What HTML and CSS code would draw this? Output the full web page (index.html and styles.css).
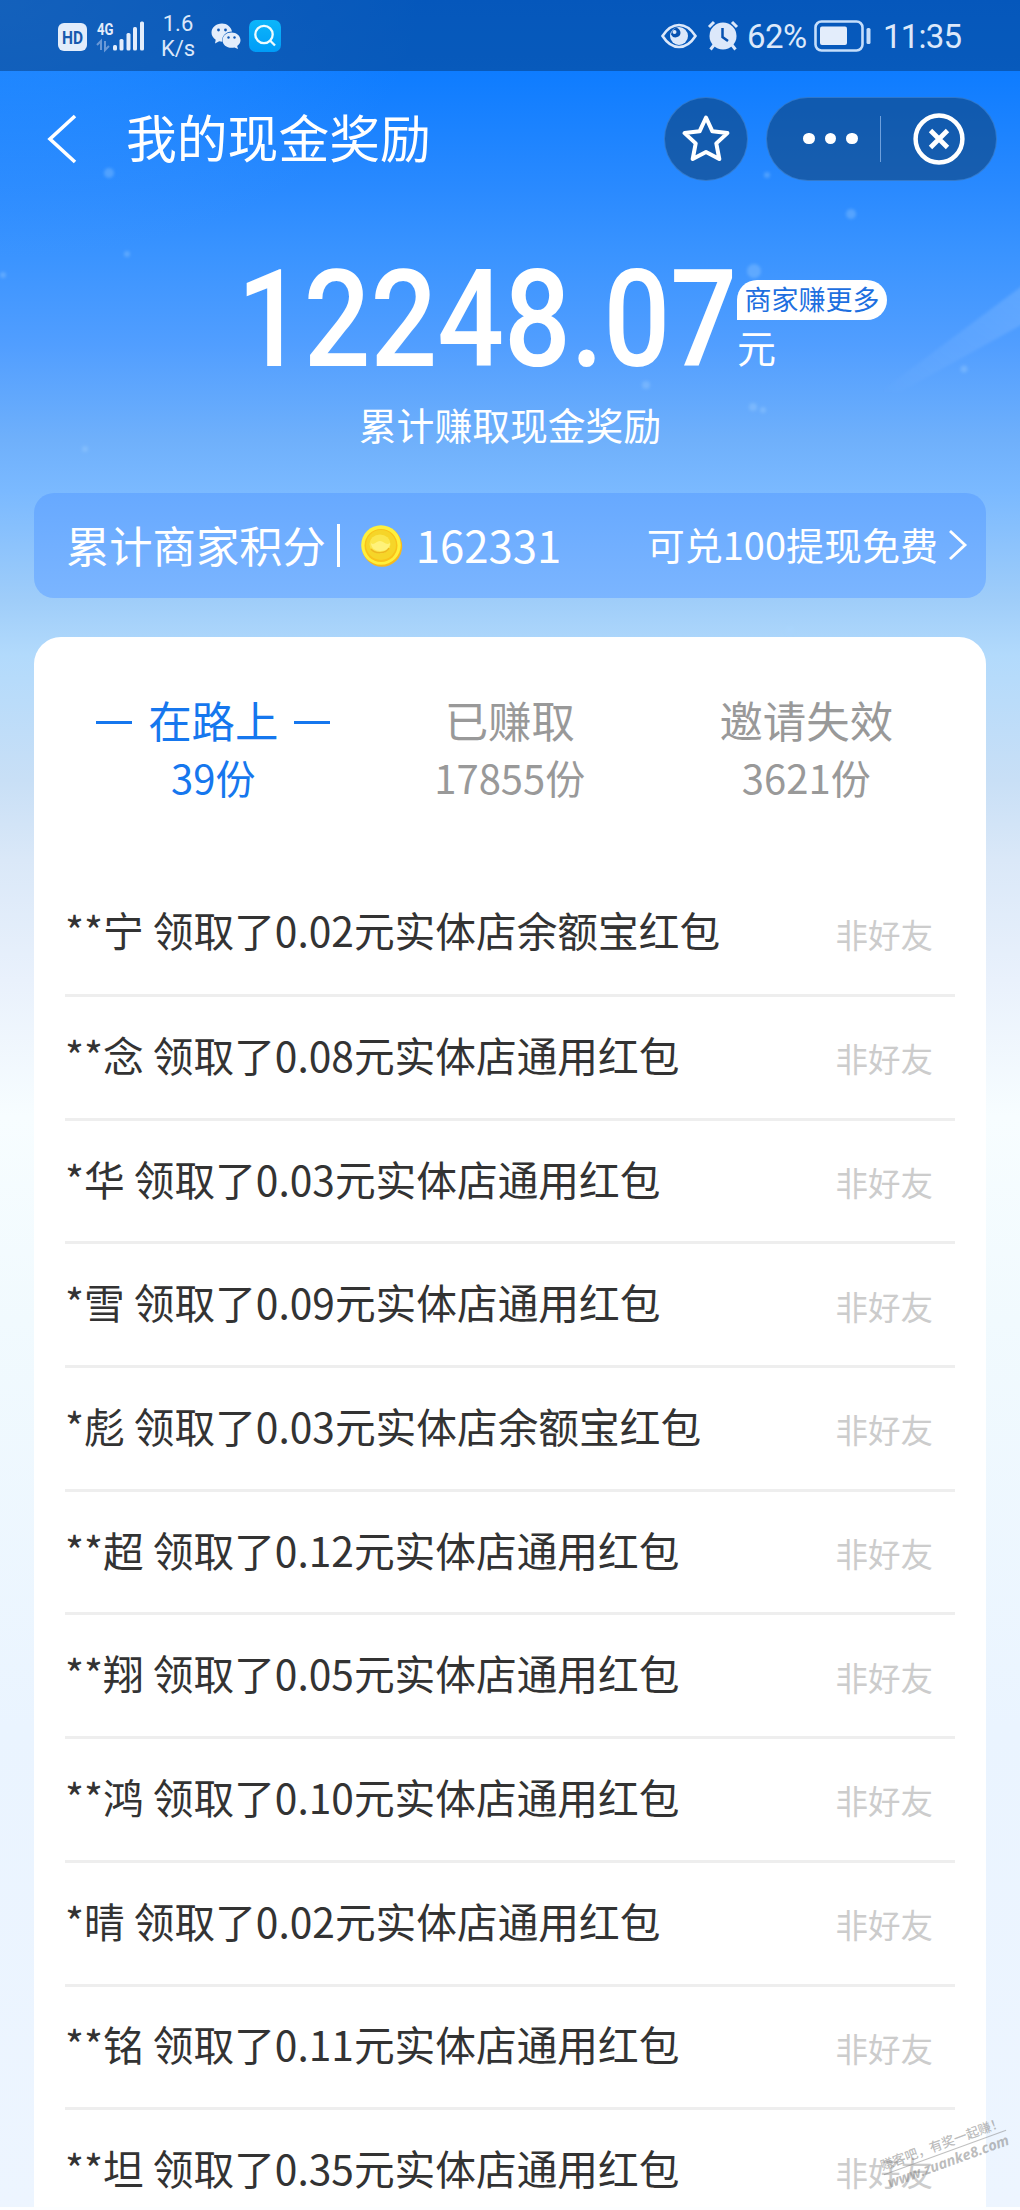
FILE: index.html
```
<!DOCTYPE html>
<html lang="zh-CN">
<head>
<meta charset="utf-8">
<title>我的现金奖励</title>
<link rel="stylesheet" href="styles.css">
</head>
<body>
<div class="page">
  <svg class="sparkles" width="1020" height="660" viewBox="0 0 1020 660" aria-hidden="true">
    <defs>
      <linearGradient id="ray" x1="0" y1="1" x2="1" y2="0"><stop offset="0" stop-color="#fff" stop-opacity="0"/><stop offset="1" stop-color="#fff" stop-opacity=".15"/></linearGradient>
      <filter id="soft" x="-20%" y="-20%" width="140%" height="140%"><feGaussianBlur stdDeviation="1.500"/></filter>
    </defs>
    <path d="M880 392 L1030 280 L1030 320 L900 392 Z" fill="url(#ray)" filter="url(#soft)"/>
    <g fill="#a9d8ff" fill-opacity=".3" filter="url(#soft)">
      <circle cx="109" cy="173" r="5"/><circle cx="3" cy="275" r="3"/><circle cx="127" cy="254" r="3"/>
      <circle cx="85" cy="449" r="3"/><circle cx="851" cy="214" r="5"/><circle cx="767" cy="175" r="3"/>
      <circle cx="754" cy="271" r="7"/><circle cx="646" cy="385" r="4"/><circle cx="753" cy="407" r="4"/>
      <circle cx="763" cy="410" r="3"/><circle cx="964" cy="369" r="3.500"/><circle cx="790" cy="630" r="4"/>
    </g>
  </svg>

  <header class="status">
    <svg class="status-left" width="150" height="70" viewBox="0 0 150 70">
      <rect x="58" y="22" width="29" height="28" rx="6" fill="#e3edfb"/>
      <text x="72.500" y="42.500" class="hd" text-anchor="middle" textLength="21" lengthAdjust="spacingAndGlyphs">HD</text>
      <text x="97" y="34" class="net" textLength="16.500" lengthAdjust="spacingAndGlyphs">4G</text>
      <path d="M97 44l4-4v9M105 40v9l4-4" stroke="#6a99d6" stroke-width="2" fill="none"/>
      <g fill="#e3edfb"><rect x="113" y="44" width="4" height="5.500" rx="1.500"/><rect x="119.500" y="38" width="4" height="11.500" rx="1.500"/><rect x="126.500" y="32" width="4" height="17.500" rx="1.500"/><rect x="133" y="26" width="4" height="23.500" rx="1.500"/><rect x="140" y="20.500" width="4" height="29" rx="1.500"/></g>
    </svg>
    <div class="speed"><span>1.6</span><span>K/s</span></div>
    <svg class="wechat" width="30" height="26" viewBox="0 0 30 26">
      <path fill="#e3edfb" d="M11 .5C5 .5 .5 4.500 .5 9.500c0 3 1.600 5.500 4.200 7.200L4 20.500l4.200-2.200 3 .4C10.500 13 15 8.500 21 8.500 20 4 16 .5 11 .5z"/>
      <path fill="#e3edfb" d="M20.500 9.500c-5 0-9 3.400-9 7.700s4 7.600 9 7.600c1 0 2-.1 3-.4l3.500 1.600-.8-3c2-1.500 3.300-3.500 3.300-5.800 0-4.300-4-7.700-9-7.700z"/>
      <g fill="#0f57b4"><circle cx="7.500" cy="7" r="1.400"/><circle cx="14.500" cy="7" r="1.400"/><circle cx="17.500" cy="14.500" r="1.200"/><circle cx="23.500" cy="14.500" r="1.200"/></g>
    </svg>
    <svg class="search" width="32" height="32" viewBox="0 0 32 32"><defs><linearGradient id="sq" x1="0" y1="0" x2="0" y2="1"><stop stop-color="#0cb6fa"/><stop offset="1" stop-color="#009cf8"/></linearGradient></defs><rect width="32" height="32" rx="7" fill="url(#sq)"/><circle cx="15" cy="14.500" r="8.700" fill="none" stroke="#eefcff" stroke-width="2.300"/><path d="M21 20.500l5 5" stroke="#eefcff" stroke-width="2.300"/></svg>
    <svg class="eye" width="36" height="26" viewBox="0 0 36 26"><path d="M1.500 13C6 6 11.500 2 18 2s12 4 16.500 11C30 20 24.500 24 18 24S6 20 1.500 13z" fill="none" stroke="#dce8fa" stroke-width="2.600"/><circle cx="18" cy="13" r="9" fill="#dce8fa"/><path d="M15.500 4.500c2.500 1 4 3 4 5.500a5 5 0 0 1-9.500 1.500A9 9 0 0 1 15.500 4.500z" fill="#0651b0"/><circle cx="13.500" cy="9" r="2" fill="#dce8fa"/></svg>
    <svg class="alarm" width="32" height="32" viewBox="0 0 32 32"><circle cx="16" cy="16" r="13.500" fill="#dce8fa"/><path d="M2 7l5-5M30 7l-5-5M7 25l-3.500 4.500M25 25l3.500 4.500" stroke="#dce8fa" stroke-width="3"/><path d="M15.500 8v9l5.500 4" fill="none" stroke="#0651b0" stroke-width="2.500"/></svg>
    <span class="percent">62%</span>
    <svg class="battery" width="58" height="32" viewBox="0 0 58 32"><rect x="1.500" y="1.500" width="47" height="29" rx="6" fill="none" stroke="#c5defb" stroke-width="2.600"/><rect x="6" y="6.500" width="27" height="18.500" rx="2" fill="#e3edfb"/><rect x="52.500" y="8" width="4" height="16" rx="1.500" fill="#c5defb"/></svg>
    <span class="clock">11:35</span>
  </header>

  <nav class="nav">
    <svg class="back" width="32" height="52" viewBox="0 0 32 52"><path d="M29 3L4 26l25 23" fill="none" stroke="#fff" stroke-width="3.600"/></svg>
    <h1 class="title">我的现金奖励</h1>
    <div class="fav">
      <svg width="48" height="50" viewBox="0 0 48 50"><path d="M24 3.500l6.400 13.800 15 1.800-11.100 10.300 3 15.600L24 38l-13.300 7 3-15.600L2.600 19.100l15-1.800z" fill="none" stroke="#fff" stroke-width="4" stroke-linejoin="round"/></svg>
    </div>
    <div class="capsule">
      <div class="dots"><i></i><i></i><i></i></div>
      <div class="close"><svg width="52" height="52" viewBox="0 0 52 52"><circle cx="26" cy="26" r="23.400" fill="none" stroke="#fff" stroke-width="4.500"/><path d="M17.500 17.500l17 17M34.500 17.500l-17 17" stroke="#fff" stroke-width="4.800"/></svg></div>
    </div>
  </nav>

  <section class="total">
    <div class="amount"><span class="number">12248.07</span>
      <div class="unit"><span class="tag">商家赚更多</span><span class="yuan">元</span></div>
    </div>
    <p class="caption">累计赚取现金奖励</p>
  </section>

  <section class="points">
    <span class="points-label">累计商家积分</span>
    <i class="bar"></i>
    <svg class="coin" width="43" height="42" viewBox="0 0 43 42"><circle cx="22" cy="21.500" r="20.200" fill="#f7b91d"/><circle cx="21" cy="20" r="19.800" fill="#fff03c"/><circle cx="21" cy="20.500" r="16.500" fill="#f9c21a"/><circle cx="21" cy="20" r="15" fill="#f6d528"/><ellipse cx="20" cy="19" rx="10.500" ry="9.500" fill="#fbe64c"/><path d="M11 18c3 3 5-2 9-2s6 5 10 2c0 5-4 8-9.500 8S11 23 11 18z" fill="#fff27a"/><path d="M11 24c4 5 15 5 18-1" fill="none" stroke="#eeb71f" stroke-width="1.500"/></svg>
    <span class="points-value">162331</span>
    <span class="redeem">可兑100提现免费</span>
    <svg class="arrow" width="20" height="32" viewBox="0 0 20 32"><path d="M2 2l15 14L2 30" fill="none" stroke="#fff" stroke-width="2.800"/></svg>
  </section>

  <main class="card">
    <div class="tabs">
      <div class="tab active"><div class="tab-name"><i></i><span>在路上</span><i></i></div><div class="tab-count">39份</div></div>
      <div class="tab"><div class="tab-name">已赚取</div><div class="tab-count">17855份</div></div>
      <div class="tab"><div class="tab-name">邀请失效</div><div class="tab-count">3621份</div></div>
    </div>
    <ul class="list">
      <li><span>**宁 领取了0.02元实体店余额宝红包</span><em>非好友</em></li>
      <li><span>**念 领取了0.08元实体店通用红包</span><em>非好友</em></li>
      <li><span>*华 领取了0.03元实体店通用红包</span><em>非好友</em></li>
      <li><span>*雪 领取了0.09元实体店通用红包</span><em>非好友</em></li>
      <li><span>*彪 领取了0.03元实体店余额宝红包</span><em>非好友</em></li>
      <li><span>**超 领取了0.12元实体店通用红包</span><em>非好友</em></li>
      <li><span>**翔 领取了0.05元实体店通用红包</span><em>非好友</em></li>
      <li><span>**鸿 领取了0.10元实体店通用红包</span><em>非好友</em></li>
      <li><span>*晴 领取了0.02元实体店通用红包</span><em>非好友</em></li>
      <li><span>**铭 领取了0.11元实体店通用红包</span><em>非好友</em></li>
      <li><span>**坦 领取了0.35元实体店通用红包</span><em>非好友</em></li>
    </ul>
  </main>
  <div class="watermark"><span class="slogan">赚客吧，有奖一起赚！</span><span class="site">www.zuanke8.com</span></div>
</div>
</body>
</html>
```
FILE: styles.css
```
* { box-sizing: border-box; }
body { margin: 0; background: #fff; font-family: "Noto Sans CJK SC", "Noto Sans", sans-serif; color: #333; }
svg { display: block; flex: none; }
i, em { font-style: normal; }
span { white-space: nowrap; }

.page {
  position: relative; width: 1020px; height: 2210px; overflow: hidden;
  display: flex; flex-direction: column;
  border-bottom: 3px solid #fdfeff;
  background:
    radial-gradient(ellipse 420px 260px at 0 0, rgba(80,165,255,.35), transparent),
    linear-gradient(#0a78ff 0, #0e7cff 71px, #2a8aff 190px, #3993ff 250px, #519eff 345px, #6fb0fb 440px, #7ab9ff 490px, #9fcdf9 600px, #b2dafc 655px, #c8dff6 780px, #dae8f8 860px, #e9f1fc 980px, #f7fdff 1116px, #f1fafe 1320px, #eaf4ff 1728px, #edf5ff 2210px);
}
.sparkles { position: absolute; left: 0; top: 0; }

.status {
  position: relative; flex: none; height: 71px; display: flex; align-items: center;
  background: rgba(0,42,94,.42); color: #dce8fa; font-family: Roboto, sans-serif;
}
.hd { font: 700 18px Roboto, sans-serif; fill: #1759ae; }
.net { font: 700 17px Roboto, sans-serif; fill: #e3edfb; }
.speed { display: flex; flex-direction: column; align-items: center; width: 56px; font-size: 22px; line-height: 25px; }
.wechat { margin-left: 5px; }
.search { margin-left: 8px; }
.eye { margin-left: 380px; }
.alarm { margin-left: 10px; }
.percent { width: 67px; margin-left: 8px; font-size: 33px; letter-spacing: -.6px; padding-top: 2px; }
.clock { margin-left: 11px; font-size: 33px; letter-spacing: -.8px; padding-top: 2px; }

.nav { position: relative; flex: none; height: 135px; display: flex; align-items: center; padding-left: 46px; }
.title { margin: 0 0 6px 48px; width: 538px; font-size: 50.800px; line-height: 60px; font-weight: 400; color: #fff; }
.fav, .capsule { height: 84px; border: 1px solid rgba(80,150,230,.5); background: rgba(12,62,115,.57); display: flex; align-items: center; }
.fav { width: 84px; border-radius: 42px; justify-content: center; }
.capsule { width: 231px; margin-left: 18px; border-radius: 42px; }
.dots { display: flex; gap: 10px; width: 115px; height: 46px; padding-left: 36px; align-items: center; border-right: 1px solid #6fa0dc; }
.dots i { width: 11.500px; height: 11.500px; flex: none; border-radius: 50%; background: #fff; }
.close { width: 116px; display: flex; justify-content: center; }

.total { position: relative; flex: none; height: 287px; color: #fff; }
.amount { display: flex; height: 180px; padding: 49px 0 0 237px; }
.number { width: 500px; height: 130px; font: 500 135px/130px Roboto, sans-serif; transform: scaleX(.87); transform-origin: 0 0; }
.unit { display: flex; flex-direction: column; padding-top: 25px; }
.tag { width: 150px; height: 40px; border-radius: 20px 20px 20px 0; background: #fff; color: #1d6fe0; font-size: 27px; line-height: 38px; text-align: center; }
.yuan { font-size: 39px; line-height: 53px; }
.caption { margin: 18px 0 0; font-size: 37.800px; line-height: 40px; text-align: center; }

.points {
  position: relative; flex: none; height: 105px; margin: 0 34px; padding: 0 18px 0 32px; border-radius: 20px;
  display: flex; align-items: center; color: #fff; background: linear-gradient(#67a9ff, #7bb5ff);
}
.points-label { font-size: 43.300px; line-height: 50px; margin-bottom: 4px; }
.bar { width: 3px; height: 43px; margin-left: 11px; background: #fff; }
.coin { margin-left: 20px; }
.points-value { margin: 0 0 3px 13px; font-size: 43.700px; line-height: 50px; }
.redeem { margin: 0 0 4px auto; font-size: 38px; line-height: 50px; }
.arrow { margin: 0 0 2px 10px; }

.card { position: relative; flex: none; height: 1573px; margin: 39px 34px 0; padding: 53px 31px 0; border-radius: 27px 27px 0 0; background: #fff; }
.tabs { display: grid; grid-template-columns: repeat(3, 296.500px); height: 181px; color: #999; text-align: center; align-content: start; }
.tab-name { font-size: 43.400px; line-height: 58px; height: 58px; }
.tab-count { font-size: 40px; line-height: 59px; }
.active { color: #1677ee; }
.active .tab-name { display: flex; justify-content: center; align-items: center; gap: 16px; }
.active i { width: 36px; height: 3px; margin-top: 7px; background: #1677ee; }
.list { list-style: none; margin: 0; padding: 0; }
.list li { height: 123.700px; display: flex; align-items: center; justify-content: space-between; padding-right: 22px; border-bottom: 3px solid #eee; }
.list li:first-child { height: 126px; }
.list span { font-size: 40.700px; line-height: 48px; padding-bottom: 5px; }
.list em { font-size: 32.500px; line-height: 40px; color: #ccc; padding-top: 2px; }

.watermark { position: absolute; left: 880px; top: 2134px; width: 130px; transform: rotate(-20deg); display: flex; flex-direction: column; align-items: center; color: rgba(130,130,130,.55); }
.slogan { font-size: 13px; line-height: 18px; font-weight: 500; border-bottom: 1px solid rgba(130,130,130,.5); }
.site { font: italic 700 14.500px/18px "Open Sans", sans-serif; }
```
